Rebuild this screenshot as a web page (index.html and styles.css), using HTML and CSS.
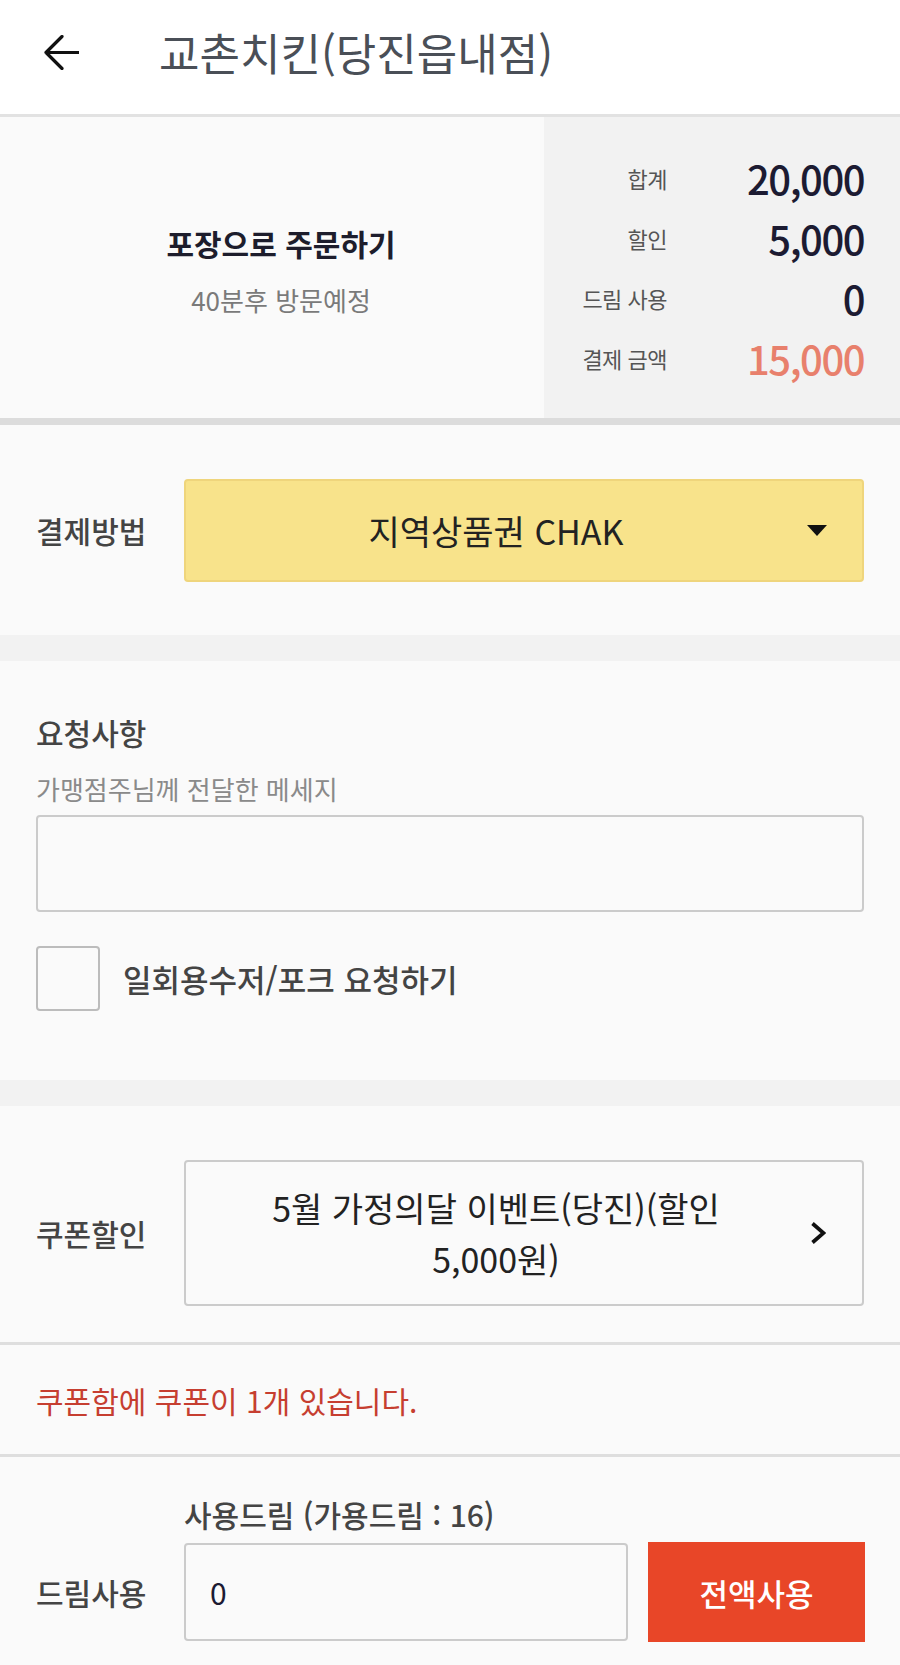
FILE: index.html
```html
<!DOCTYPE html>
<html lang="ko">
<head>
<meta charset="UTF-8" />
<meta name="viewport" content="width=device-width, initial-scale=1" />
<title>교촌치킨(당진읍내점) 주문하기</title>
<link rel="stylesheet" href="styles.css">
</head>
<body>
  <header class="app-bar">
    <svg class="back-btn" viewBox="0 0 35 35" aria-label="뒤로">
      <path d="M2 17.5H34.5M18 1.5L2 17.5L18 33.5" fill="none" stroke="#111" stroke-width="3.2" stroke-linecap="round" stroke-linejoin="round"/>
    </svg>
    <h1 class="app-title">교촌치킨(당진읍내점)</h1>
  </header>

  <section class="order-summary">
    <div class="order-type">
      <p class="order-type-title">포장으로 주문하기</p>
      <p class="order-type-sub">40분후 방문예정</p>
    </div>
    <div class="order-amounts">
      <span class="amount-label">합계</span>
      <span class="amount-value">20,000</span>
      <span class="amount-label">할인</span>
      <span class="amount-value">5,000</span>
      <span class="amount-label">드림 사용</span>
      <span class="amount-value">0</span>
      <span class="amount-label">결제 금액</span>
      <span class="amount-value total">15,000</span>
    </div>
  </section>

  <section class="pay-method">
    <span class="field-label">결제방법</span>
    <div class="select-box">
      <span class="select-text">지역상품권 CHAK</span>
      <span class="select-caret"></span>
    </div>
  </section>

  <div class="divider"></div>

  <section class="request">
    <h2 class="section-title">요청사항</h2>
    <p class="hint">가맹점주님께 전달한 메세지</p>
    <textarea class="memo"></textarea>
    <label class="check-row">
      <span class="check-box"></span>
      <span class="check-label">일회용수저/포크 요청하기</span>
    </label>
  </section>

  <div class="divider"></div>

  <section class="coupon">
    <span class="field-label">쿠폰할인</span>
    <div class="coupon-box">
      <span class="coupon-text">5월 가정의달 이벤트(당진)(할인 5,000원)</span>
      <span class="coupon-arrow">
        <svg viewBox="0 0 16 24" width="16" height="24">
          <path d="M2.5 2.5L13.5 12L2.5 21.5" fill="none" stroke="#111" stroke-width="3.8"/>
        </svg>
      </span>
    </div>
  </section>

  <div class="coupon-msg">쿠폰함에 쿠폰이 1개 있습니다.</div>

  <section class="dream">
    <p class="dream-caption">사용드림 (가용드림 : 16)</p>
    <div class="dream-row">
      <span class="field-label">드림사용</span>
      <input class="dream-input" type="text" value="0">
      <button class="dream-all">전액사용</button>
    </div>
  </section>
</body>
</html>
```

FILE: styles.css
```css
* {
  box-sizing: border-box;
}

body {
  margin: 0;
  background: #fafafa;
  color: #444;
  font-family: "Noto Sans CJK KR", "Noto Sans", sans-serif;
}

p {
  margin: 0;
}

/* Top bar */
.app-bar {
  height: 117px;
  padding: 0 0 9px 44px;
  display: flex;
  align-items: center;
  background: #fff;
  border-bottom: 3px solid #e2e2e2;
}

.back-btn {
  width: 35px;
  height: 35px;
  flex-shrink: 0;
}

.app-title {
  margin: 0 0 0 80px;
  font-size: 44px;
  font-weight: 400;
  line-height: 1.2;
  color: #4a4f57;
}

/* Order summary */
.order-summary {
  display: flex;
  height: 308px;
  border-bottom: 7px solid #dcdcdc;
}

.order-type {
  flex: 1;
  display: flex;
  flex-direction: column;
  align-items: center;
  justify-content: center;
  padding: 4px 0 0 18px;
  background: #fafafa;
}

.order-type-title {
  font-size: 30px;
  font-weight: 700;
  line-height: 40px;
  color: #1d1d2c;
}

.order-type-sub {
  margin-top: 20px;
  font-size: 26px;
  line-height: 34px;
  color: #7a7a7a;
}

.order-amounts {
  width: 356px;
  padding-right: 36px;
  display: grid;
  grid-template-columns: 123px 1fr;
  grid-auto-rows: 60px;
  align-content: center;
  align-items: center;
  background: #f2f2f2;
}

.amount-label {
  text-align: right;
  font-size: 22px;
  letter-spacing: -0.5px;
  color: #555;
}

.amount-value {
  text-align: right;
  font-size: 40px;
  font-weight: 500;
  letter-spacing: -1.5px;
  color: #1c1b32;
}

.amount-value.total {
  color: #e8806c;
}

/* Shared row label */
.field-label {
  width: 148px;
  flex-shrink: 0;
  font-size: 30px;
  font-weight: 500;
  color: #444;
}

/* Payment method */
.pay-method {
  height: 210px;
  padding: 0 36px;
  display: flex;
  align-items: center;
}

.select-box {
  flex: 1;
  height: 103px;
  display: flex;
  align-items: center;
  background: #f8e38b;
  border: 2px solid #efd57c;
  border-radius: 4px;
}

.select-text {
  flex: 1;
  padding-left: 40px;
  text-align: center;
  font-size: 34px;
  color: #222;
}

.select-caret {
  width: 96px;
  padding-left: 6px;
  display: flex;
  justify-content: center;
}

.select-caret::before {
  content: "";
  border-left: 10.5px solid transparent;
  border-right: 10.5px solid transparent;
  border-top: 11px solid #111;
}

.divider {
  height: 26px;
  background: #f2f2f2;
}

/* Request */
.request {
  padding: 54px 36px 69px;
}

.section-title {
  margin: 0;
  font-size: 30px;
  font-weight: 500;
  line-height: 35px;
  color: #444;
}

.hint {
  margin: 23px 0 10px;
  font-size: 26px;
  line-height: 32px;
  color: #8a8a8a;
}

.memo {
  display: block;
  width: 100%;
  height: 97px;
  background: #fafafa;
  border: 2px solid #cbcbcb;
  border-radius: 4px;
  resize: none;
}

.check-row {
  margin-top: 34px;
  display: flex;
  align-items: center;
  gap: 23px;
}

.check-box {
  width: 64px;
  height: 65px;
  border: 2px solid #bcbcbc;
  border-radius: 4px;
}

.check-label {
  font-size: 31px;
  font-weight: 500;
  color: #444;
}

/* Coupon */
.coupon {
  padding: 54px 36px 36px;
  display: flex;
  align-items: center;
  border-bottom: 3px solid #dedede;
}

.coupon-box {
  flex: 1;
  height: 146px;
  display: flex;
  align-items: center;
  border: 2px solid #cbcbcb;
  border-radius: 4px;
}

.coupon-text {
  flex: 1;
  padding-left: 60px;
  text-align: center;
  font-size: 34px;
  line-height: 51px;
  color: #222;
}

.coupon-arrow {
  width: 116px;
  padding-left: 28px;
  display: flex;
  justify-content: center;
}

.coupon-msg {
  height: 112px;
  padding: 0 36px;
  display: flex;
  align-items: center;
  border-bottom: 3px solid #dedede;
  font-size: 30px;
  color: #c63e30;
}

/* Dream points */
.dream {
  padding: 40px 35px 0 36px;
}

.dream-caption {
  margin: 0 0 11px 148px;
  font-size: 30px;
  font-weight: 500;
  line-height: 34px;
  color: #444;
}

.dream-row {
  display: flex;
  align-items: center;
}

.dream-input {
  flex: 1;
  min-width: 0;
  height: 98px;
  padding: 0 24px;
  background: #fafafa;
  border: 2px solid #cbcbcb;
  border-radius: 4px;
  font-family: inherit;
  font-size: 30px;
  color: #1c1b32;
}

.dream-all {
  width: 217px;
  height: 100px;
  margin-left: 20px;
  background: #e84628;
  border: none;
  font-family: inherit;
  font-size: 31px;
  font-weight: 500;
  color: #fff;
}
```
